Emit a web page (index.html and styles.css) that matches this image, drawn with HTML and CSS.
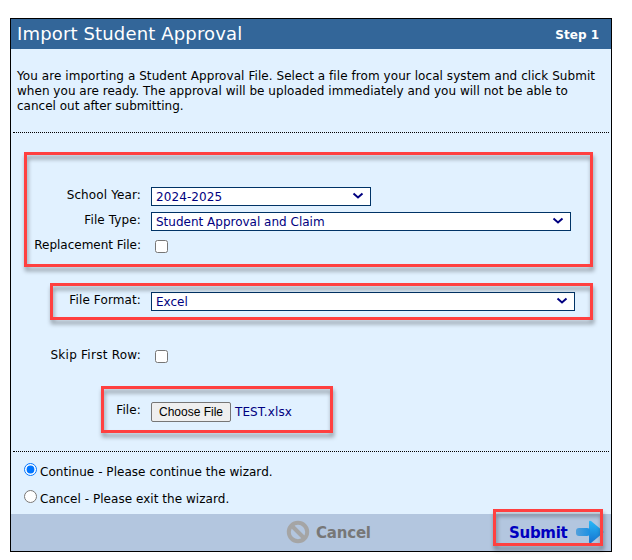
FILE: index.html
```html
<!DOCTYPE html>
<html lang="en">
<head>
<meta charset="utf-8">
<title>Import Student Approval</title>
<link rel="stylesheet" href="styles.css">
</head>
<body>
<main class="panel">
  <header class="head"><h1 class="title">Import Student Approval</h1><span class="step">Step 1</span></header>
  <div class="intro">
    <div class="line l1">You are importing a Student Approval File. Select a file from your local system and click Submit</div>
    <div class="line l2">when you are ready. The approval will be uploaded immediately and you will not be able to</div>
    <div class="line l3">cancel out after submitting.</div>
  </div>
  <form class="form">
    <div class="row"><label class="label wide">School Year:</label><div class="select short"><span>2024-2025</span><svg class="chev" viewBox="0 0 12 8"><path d="M1.5 1.5 6 5.4 10.5 1.5"/></svg></div></div>
    <div class="row"><label class="label wide">File Type:</label><div class="select medium"><span>Student Approval and Claim</span><svg class="chev" viewBox="0 0 12 8"><path d="M1.5 1.5 6 5.4 10.5 1.5"/></svg></div></div>
    <div class="row"><label class="label">Replacement File:</label><input class="check" type="checkbox"></div>
    <div class="row spaced"><label class="label wide">File Format:</label><div class="select long"><span>Excel</span><svg class="chev" viewBox="0 0 12 8"><path d="M1.5 1.5 6 5.4 10.5 1.5"/></svg></div></div>
    <div class="row spaced"><label class="label wider">Skip First Row:</label><input class="check" type="checkbox"></div>
    <div class="row spaced"><label class="label wide">File:</label><button class="choose" type="button"><span>Choose File</span></button><span class="filename">TEST.xlsx</span></div>
  </form>
  <div class="options">
    <label class="option"><input class="radio" type="radio" name="next" checked><span>Continue - Please continue the wizard.</span></label>
    <label class="option"><input class="radio" type="radio" name="next"><span>Cancel - Please exit the wizard.</span></label>
  </div>
  <footer class="foot">
    <div class="cancel"><svg class="ban" viewBox="0 0 24 24"><circle cx="12" cy="12" r="9.2"/><path d="M5.5 5.5 18.500 18.500"/></svg><span>Cancel</span></div>
    <div class="submit"><span>Submit</span><svg class="arrow" viewBox="0 0 30 26"><defs><linearGradient id="blue" x1="0" y1="0" x2="0" y2="1"><stop offset="0" stop-color="#27b8f8"/><stop offset="1" stop-color="#1673cf"/></linearGradient><linearGradient id="tail" x1="0" y1="0" x2="1" y2="0"><stop offset="0" stop-color="#52a0dc"/><stop offset="1" stop-color="#1b90e2"/></linearGradient></defs><path fill="url(#blue)" d="M14 3Q14 1 16 2L28 12Q29 13 28 14L16 24Q14 25 14 23Z"/><rect x="1" y="9" width="14" height="8" rx="3" fill="url(#tail)"/></svg></div>
  </footer>
</main>
<div class="mark year"></div>
<div class="mark format"></div>
<div class="mark file"></div>
<div class="mark send"></div>
</body>
</html>
```

FILE: styles.css
```css
* { box-sizing: border-box; }
body { margin: 0; width: 632px; height: 560px; overflow: hidden; background: #fff; color: #000; font: 12px/15px "DejaVu Sans", sans-serif; white-space: nowrap; }
.panel { width: 602px; height: 534px; margin: 18px 0 0 10px; border: 1px solid #000; background: #e1f1ff; display: flex; flex-direction: column; }
.head { height: 30px; flex: none; background: #336699; color: #fff; display: flex; justify-content: space-between; align-items: center; padding: 0 12px 0 6px; }
.title { margin: 0; font-size: 18px; font-weight: normal; line-height: 30px; letter-spacing: .15px; }
.step { font-weight: bold; padding-top: 2px; }
.intro { height: 84px; flex: none; margin: 0 2px; padding: 20px 4px 0; border-bottom: 1px dotted #000; }
.l1 { letter-spacing: .065px; }
.l2 { letter-spacing: .03px; }
.form { margin: 0 2px; height: 319px; flex: none; padding-top: 51px; border-bottom: 1px dotted #000; }
.row { height: 25px; display: flex; align-items: flex-start; padding-top: 3px; }
.spaced { margin-top: 30px; }
.label { width: 128px; margin-right: 10px; padding-top: 1px; text-align: right; }
.wide { letter-spacing: .12px; }
.wider { letter-spacing: .25px; }
.select { height: 19px; border: 1px solid #003366; background: #fff; color: #000080; display: flex; justify-content: space-between; align-items: center; padding: 1px 6px 0 4px; }
.short { width: 220px; letter-spacing: .1px; }
.medium { width: 420px; }
.long { width: 424px; }
.chev { width: 12px; height: 8px; margin-top: -2px; fill: none; stroke: #000080; stroke-width: 2; }
.check { width: 13px; height: 13px; margin: 3px 4px; }
.choose { width: 80px; height: 20px; padding: 0; border: 1px solid #767676; border-radius: 2px; background: #efefef; font: 12px/16px "Liberation Sans", sans-serif; color: #000; }
.filename { color: #000080; margin: 3px 0 0 4px; letter-spacing: .1px; }
.options { height: 62px; flex: none; padding: 11px 13px 0; }
.option { display: flex; height: 27px; }
.radio { width: 13px; height: 13px; margin: 0 3px 0 0; }
.option span { padding-top: 2px; letter-spacing: .04px; }
.foot { flex: 1; background: #b3c6df; display: flex; align-items: center; color: #777; font-size: 15px; font-weight: bold; }
.foot span { padding-top: 2px; }
.cancel { display: flex; align-items: center; margin-left: 275px; width: 223px; gap: 6px; letter-spacing: -.2px; }
.ban { width: 24px; height: 24px; margin-top: -2px; fill: none; stroke: #a5a5a5; stroke-width: 4; }
.submit { display: flex; align-items: center; color: #0000c0; gap: 8px; letter-spacing: -.3px; }
.arrow { width: 30px; height: 26px; margin-top: -2px; }
.mark { position: absolute; border: 3px solid #ff4040; filter: drop-shadow(1px 4px 2px rgba(0,0,0,.38)); pointer-events: none; }
.year { left: 24px; top: 152px; width: 569px; height: 115px; }
.format { left: 50px; top: 283px; width: 543px; height: 37px; }
.file { left: 101px; top: 386px; width: 232px; height: 47px; }
.send { left: 493px; top: 509px; width: 110px; height: 37px; }
```
